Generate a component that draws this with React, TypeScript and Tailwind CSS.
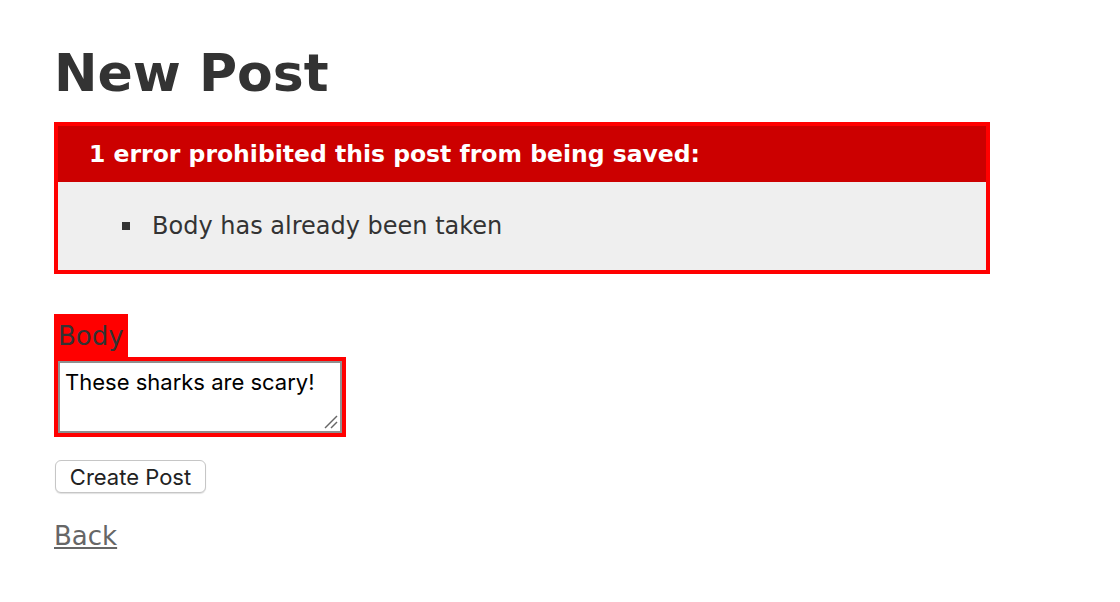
import React from "react";

export default function App() {
  const verdana = { fontFamily: '"DejaVu Sans", Verdana, sans-serif' };
  return (
    <div
      className="min-h-[602px] bg-white pl-[54px] pt-[55px] text-[#333]"
      style={verdana}
    >
      <h1 className="m-0 text-[52px] font-bold leading-[36px] text-[#333]">
        New Post
      </h1>

      <div className="mt-[31px] w-[936px] border-4 border-[#ff0000] bg-[#efefef]">
        <h2 className="m-0 h-[56px] bg-[#cc0000] py-[10px] pl-[31px] text-[23.5px] font-bold leading-[36px] text-white">
          1 error prohibited this post from being saved:
        </h2>
        <ul className="m-0 list-none py-[26px] pl-[64px]">
          <li className="flex items-center text-[24px] leading-[36px] text-[#333]">
            <span className="mr-[22px] inline-block h-[8px] w-[8px] bg-[#333]" />
            <span>Body has already been taken</span>
          </li>
        </ul>
      </div>

      <div className="mt-[40px]">
        <div className="table bg-[#ff0000] p-[4px]">
          <label className="block pt-[2px] text-[26px] leading-[33px] text-[#333]">Body</label>
        </div>
        <div className="table bg-[#ff0000] p-[4px]">
          <div className="relative">
            <textarea
              defaultValue="These sharks are scary!"
              className="block h-[72px] w-[284px] resize-none border-2 border-[#8f8f8f] bg-white px-[5px] pt-[6px] text-[22px] leading-[26px] text-black outline-none"
              style={{ fontFamily: 'Inter, "Noto Sans", sans-serif' }}
            />
            <svg
              className="absolute bottom-[4px] right-[4px]"
              width="14"
              height="14"
              viewBox="0 0 14 14"
            >
              <line x1="1" y1="13" x2="13" y2="1" stroke="#666" strokeWidth="1.4" />
              <line x1="7" y1="13" x2="13" y2="7" stroke="#666" strokeWidth="1.4" />
            </svg>
          </div>
        </div>
      </div>

      <button
        className="ml-[1px] mt-[23px] block h-[33px] w-[151px] rounded-[6px] border border-[#c6c6c6] bg-white pt-[2px] text-[22px] leading-[29px] text-[#222] shadow-[0_1px_1px_rgba(0,0,0,0.12)]"
        style={{ fontFamily: 'Inter, "Noto Sans", sans-serif' }}
      >
        Create Post
      </button>

      <div className="mt-[25px] leading-[36px]">
        <a href="#" className="text-[26px] text-[#666] underline">
          Back
        </a>
      </div>
    </div>
  );
}
